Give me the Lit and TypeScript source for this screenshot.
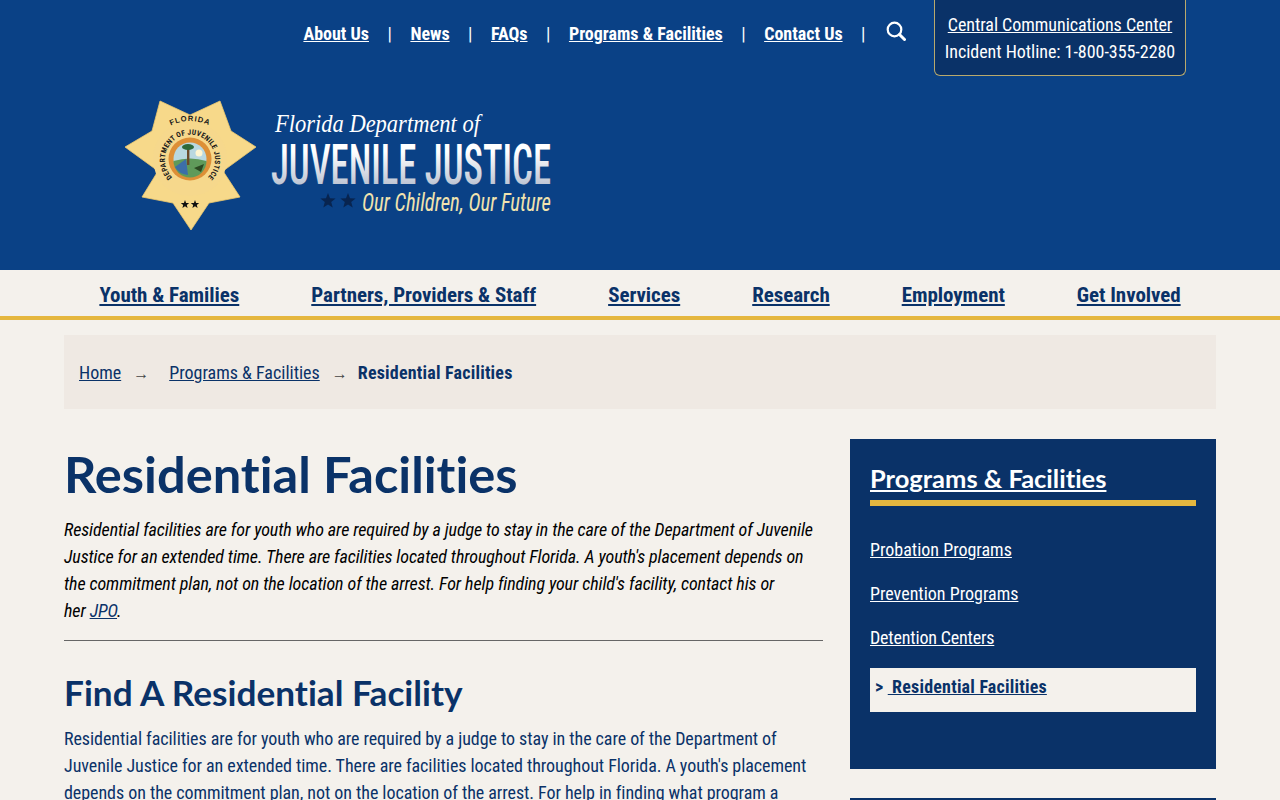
import { LitElement, html, css, svg } from "lit";
import { customElement } from "lit/decorators.js";

@customElement("app-root")
export class AppRoot extends LitElement {
  static styles = css`
    :host { display: block; height: 800px; overflow: hidden; background: #f4f1ec; font-family: "Roboto Condensed", "Liberation Sans Narrow", Roboto, sans-serif; font-stretch: condensed; font-size: 18px; line-height: 27px; color: #0a3268; }
    a { color: inherit; text-decoration: underline; }
    .top { background: #0a4186; height: 270px; display: flex; flex-direction: column; box-sizing: border-box; }
    .util { display: flex; justify-content: flex-end; align-items: flex-start; padding-right: 94px; color: #fff; height: 76px; }
    .links { display: flex; align-items: center; height: 67px; font-weight: 700; }
    .links i { font-style: normal; font-weight: 400; margin: 0 18.5px; }
    .search { margin: 21px 28px 0 2px; display: flex; }
    .hot { width: 252px; height: 76px; box-sizing: border-box; background: #0a3268; border: 1px solid #b9a96c; border-top: 0; border-radius: 0 0 6px 6px; text-align: center; padding-top: 11px; white-space: nowrap; letter-spacing: -0.04px; }
    .logo { display: block; margin: 20px 0 0 120px; }
    .nav { height: 50px; box-sizing: border-box; border-bottom: 4px solid #e5b73f; display: flex; justify-content: center; gap: 72px; align-items: center; padding-top: 4px; font-size: 21px; font-weight: 700; letter-spacing: -0.05px; }
    .wrap { padding: 15px 64px 0; }
    .crumb { background: #efe9e3; height: 74px; display: flex; align-items: center; padding-left: 15px; }
    .arrow { color: #444; margin: 3px 20px 0 12px; font: 16px/1 "Liberation Sans", sans-serif; }
    .arrow.b { margin-right: 10px; }
    .crumb b { font-weight: 700; letter-spacing: 0.2px; }
    .cols { display: flex; gap: 27px; margin-top: 30px; align-items: flex-start; }
    .main { width: 759px; flex: none; }
    h1 { font: 700 50.6px/72px Lato, "Open Sans", sans-serif; font-variant-ligatures: none; margin: -1px 0 6px; }
    .lead { margin: 0; font-style: italic; color: #000; letter-spacing: -0.1px; }
    .lead a { color: #0a3268; }
    hr { border: 0; border-top: 1px solid #666; margin: 16px 0 0; }
    h2 { font: 700 35.2px/48px Lato, "Open Sans", sans-serif; font-variant-ligatures: none; margin: 27px 0 9px; }
    .body { margin: 0; letter-spacing: -0.06px; }
    .side { width: 366px; flex: none; }
    .panel { background: #0a3268; height: 330px; box-sizing: border-box; padding: 20px; color: #fff; }
    .panel h3 { font: 700 25.5px/39px Lato, "Open Sans", sans-serif; font-variant-ligatures: none; margin: 0; padding-bottom: 2px; border-bottom: 6px solid #e5b73f; }
    .menu { list-style: none; margin: 21px 0 0; padding: 0; }
    .menu li { height: 44px; display: flex; align-items: center; }
    .menu li:nth-child(3) { letter-spacing: -0.18px; }
    .menu li.cur { background: #f4f1ec; color: #0a3268; font-weight: 700; margin-top: 9px; align-items: flex-start; padding: 5px 0 0 5px; height: 39px; letter-spacing: 0.2px; white-space: pre; }
    .next { border-top: 2px solid #0a3268; margin-top: 29px; height: 10px; background: #eaf0f4; }
  `;

  private logo() {
    const star = "160,100 190,114 220,100 231,130 256,146 223,170 240,196 209,202 191,229 173,202 142,196 158,170 125,146 152,130";
    const starPts = (cx: number, cy: number, r: number) => {
      const p: string[] = [];
      for (let i = 0; i < 10; i++) {
        const rr = i % 2 ? r * 0.42 : r;
        const a = -Math.PI / 2 + (i * Math.PI) / 5;
        p.push(`${(cx + rr * Math.cos(a)).toFixed(1)},${(cy + rr * Math.sin(a)).toFixed(1)}`);
      }
      return p.join(" ");
    };
    return html`<svg class="logo" width="440" height="140" viewBox="120 95 440 140" role="img">
      ${svg`
      <defs>
        <linearGradient id="g" x1="0" y1="0" x2="0" y2="1"><stop offset="0.3" stop-color="#fff"/><stop offset="1" stop-color="#a3adc2"/></linearGradient>
        <path id="arcDept" d="M172 176 A25 25 0 1 1 208 176"/>
        <path id="arcFl" d="M170 125 Q190 115 210 125"/>
      </defs>
      <polygon points="${star}" fill="#f7d98a" stroke="#efc96c" stroke-width=".8"/>
      <circle cx="190" cy="158" r="37" fill="#f6d88c"/>
      <circle cx="190" cy="158" r="21.5" fill="#dd8f36"/>
      <circle cx="190" cy="158" r="16.5" fill="#b9d8e0"/>
      <path d="M173.5 160 Q190 155 206.5 160 A16.5 16.5 0 0 1 173.5 160 Z" fill="#5f9a5a"/>
      <path d="M175 166 L186 158 L188 174 A16.5 16.5 0 0 1 175 166 Z" fill="#3c6ea8"/>
      <rect x="187" y="145" width="2.4" height="19" fill="#6b4a2a"/>
      <ellipse cx="188" cy="146" rx="6" ry="3" fill="#2d6a3a"/>
      <circle cx="199" cy="152" r="3.5" fill="#fff6d2"/>
      <path d="M194 167 L204 163 L201 171 Z" fill="#2b4a22"/>
      <text font-family="Liberation Sans" font-size="7.6" font-weight="700" fill="#1a1a1a" letter-spacing=".9"><textPath href="#arcFl" startOffset="50%" text-anchor="middle">FLORIDA</textPath></text>
      <text font-family="Roboto Condensed, Liberation Sans Narrow" font-size="7.4" font-weight="700" fill="#1a1a1a" letter-spacing=".25"><textPath href="#arcDept" startOffset="50%" text-anchor="middle">DEPARTMENT OF JUVENILE JUSTICE</textPath></text>
      <polygon points="${starPts(185, 203.5, 4.4)}" fill="#111"/>
      <polygon points="${starPts(195, 203.5, 4.4)}" fill="#111"/>
      <text x="275" y="131" font-family="Liberation Serif" font-style="italic" font-size="25" fill="#fff" textLength="205" lengthAdjust="spacingAndGlyphs">Florida Department of</text>
      <text x="271" y="183" font-family="Roboto" font-size="56" font-weight="500" fill="url(#g)" textLength="280" lengthAdjust="spacingAndGlyphs">JUVENILE JUSTICE</text>
      <polygon points="${starPts(328, 200, 8)}" fill="#08244f"/>
      <polygon points="${starPts(348, 200, 8)}" fill="#08244f"/>
      <text x="362" y="210" font-family="Roboto" font-style="italic" font-weight="400" font-size="25" fill="#f1e3ae" textLength="189" lengthAdjust="spacingAndGlyphs">Our Children, Our Future</text>
      `}
    </svg>`;
  }

  render() {
    return html`
      <header class="top">
        <div class="util">
          <nav class="links">
            <a href="#">About Us</a><i>|</i><a href="#">News</a><i>|</i><a href="#">FAQs</a><i>|</i><a href="#">Programs &amp; Facilities</a><i>|</i><a href="#">Contact Us</a><i>|</i>
          </nav>
          <span class="search">
            <svg width="20" height="20" viewBox="0 0 20 20" fill="none" stroke="#fff"><circle cx="8.5" cy="8.5" r="6.8" stroke-width="2.2"/><path d="M13.5 13.5 L18.5 18.5" stroke-width="3" stroke-linecap="round"/></svg>
          </span>
          <div class="hot"><a href="#">Central Communications Center</a><br />Incident Hotline: 1-800-355-2280</div>
        </div>
        ${this.logo()}
      </header>
      <nav class="nav">
        <a href="#">Youth &amp; Families</a><a href="#">Partners, Providers &amp; Staff</a><a href="#">Services</a><a href="#">Research</a><a href="#">Employment</a><a href="#">Get Involved</a>
      </nav>
      <div class="wrap">
        <div class="crumb">
          <a href="#">Home</a><span class="arrow">→</span><a href="#">Programs &amp; Facilities</a><span class="arrow b">→</span><b>Residential Facilities</b>
        </div>
        <div class="cols">
          <main class="main">
            <h1>Residential Facilities</h1>
            <p class="lead">Residential facilities are for youth who are required by a judge to stay in the care of the Department of Juvenile Justice for an extended time. There are facilities located throughout Florida. A youth's placement depends on the commitment plan, not on the location of the arrest. For help finding your child's facility, contact his or her&nbsp;<a href="#">JPO</a>.</p>
            <hr />
            <h2>Find A Residential Facility</h2>
            <p class="body">Residential facilities are for youth who are required by a judge to stay in the care of the Department of Juvenile Justice for an extended time. There are facilities located throughout Florida. A youth's placement depends on the commitment plan, not on the location of the arrest. For help in finding what program a</p>
          </main>
          <aside class="side">
            <div class="panel">
              <h3><a href="#">Programs &amp; Facilities</a></h3>
              <ul class="menu">
                <li><a href="#">Probation Programs</a></li>
                <li><a href="#">Prevention Programs</a></li>
                <li><a href="#">Detention Centers</a></li>
                <li class="cur"><span>&gt; </span><a href="#"> Residential Facilities</a></li>
              </ul>
            </div>
            <div class="next"></div>
          </aside>
        </div>
      </div>
    `;
  }
}
